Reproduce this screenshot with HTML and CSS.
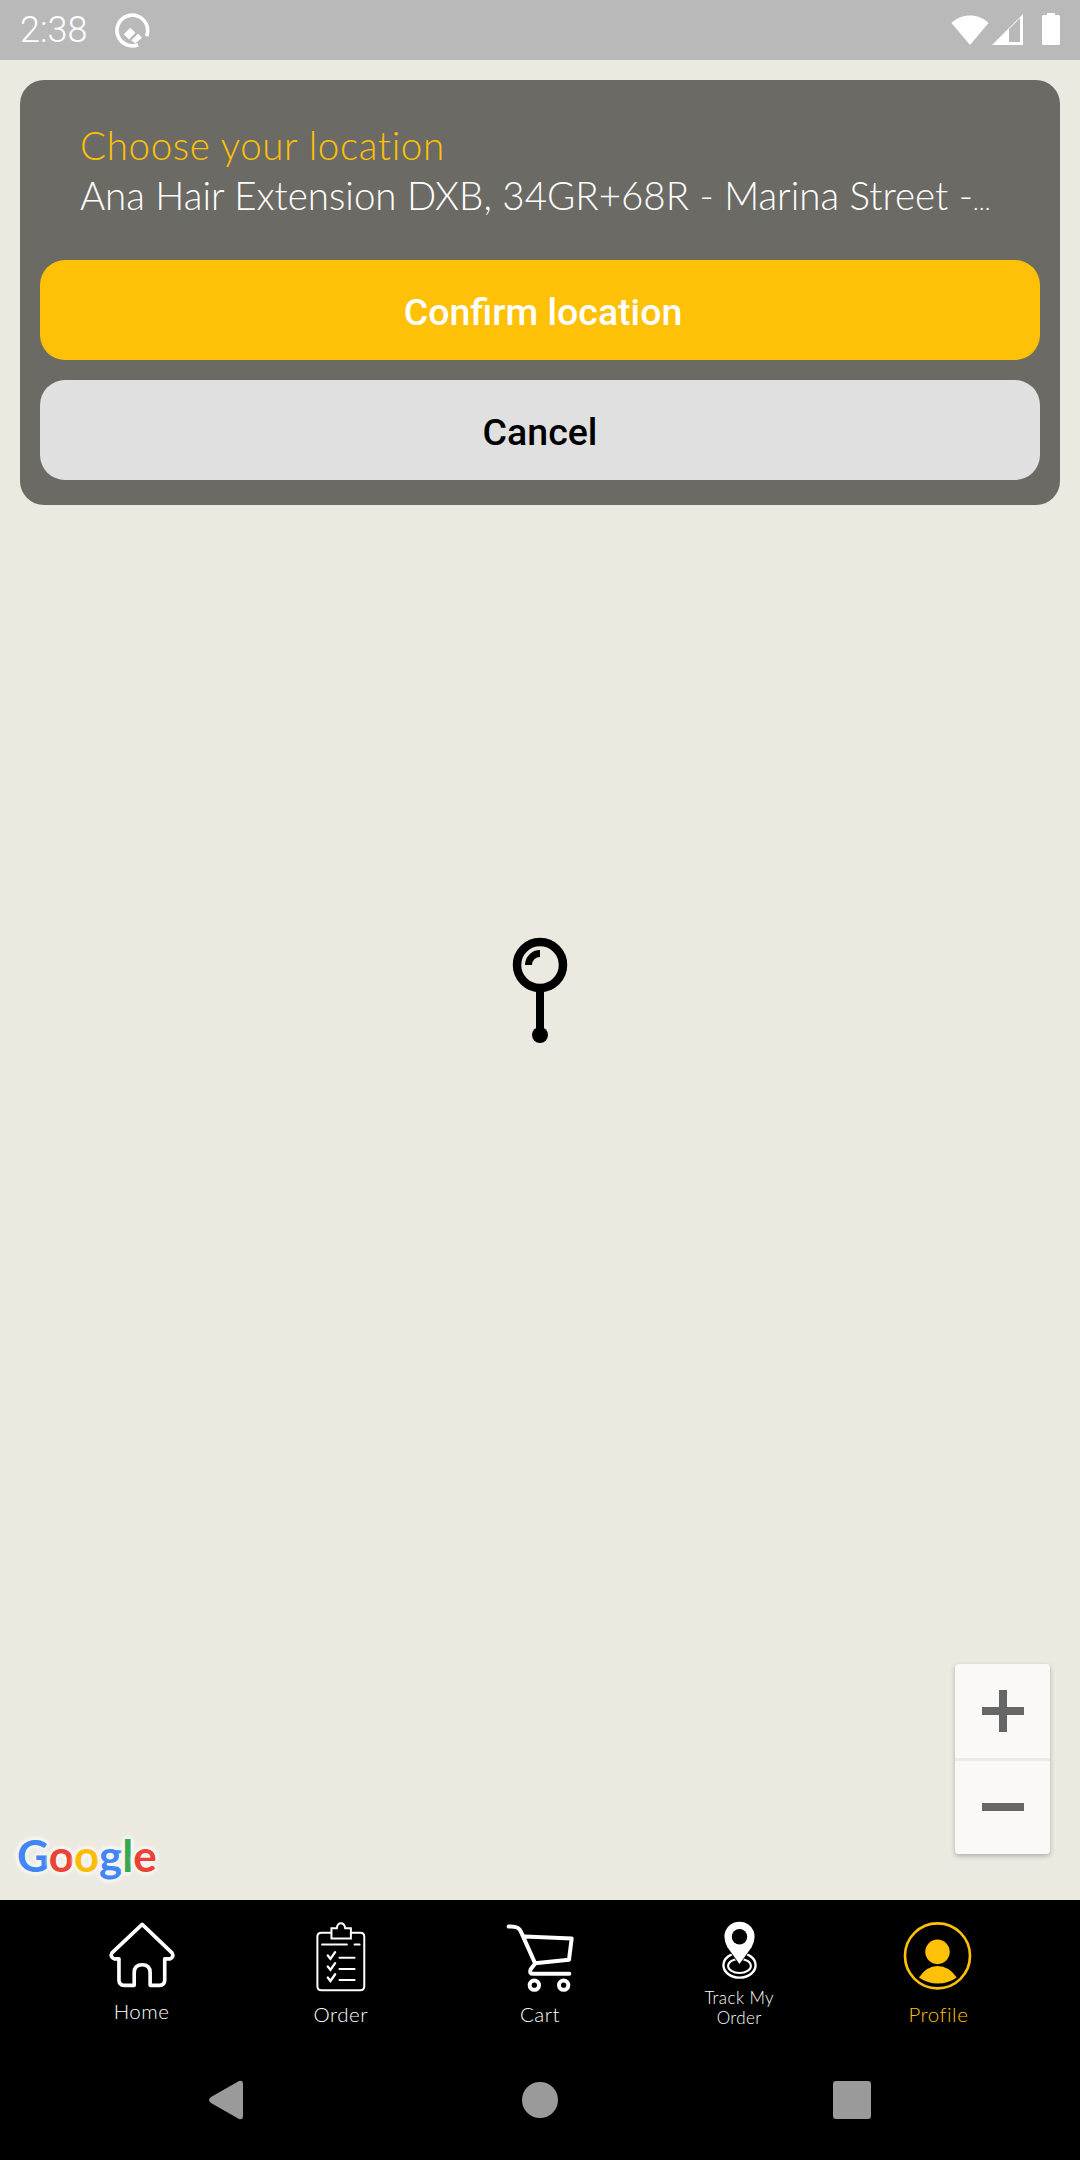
FILE: index.html
```html
<!DOCTYPE html>
<html lang="en">
<head>
<meta charset="utf-8">
<title>Choose your location</title>
<link rel="stylesheet" href="styles.css">
</head>
<body>
<div class="screen">
  <header class="status">
    <div class="status-left">
      <span class="clock">2:38</span>
      <svg class="q-icon" viewBox="335 35 105 110"><circle cx="387" cy="90" r="46" fill="none" stroke="#fff" stroke-width="11" stroke-dasharray="250 39" transform="rotate(68 387 90)"/><path d="M361 101 L381 82 L396 97 L377 117 Z M384 120 L404 100 L416 112 L396 128 Z" fill="#fff"/></svg>
    </div>
    <div class="status-right">
      <svg class="wifi" viewBox="0 0 38 32"><path d="M0.500 10 C10 0 28 0 37.500 10 L19 32 Z" fill="#fff"/></svg>
      <svg class="signal" viewBox="0 0 31 32"><path d="M31 1 V32 H0 Z M17 16 V29 H28 V5 Z" fill="#fff" fill-rule="evenodd"/></svg>
      <svg class="battery" viewBox="0 0 18 32"><path d="M5 2 H13 V0 H5 Z M1.500 2 H16.500 A1.500 1.500 0 0 1 18 3.500 V30.500 A1.500 1.500 0 0 1 16.500 32 H1.500 A1.500 1.500 0 0 1 0 30.500 V3.500 A1.500 1.500 0 0 1 1.500 2 Z" fill="#fff"/></svg>
    </div>
  </header>

  <main class="map">
    <section class="card">
      <div class="place">
        <div class="place-title">Choose your location</div>
        <div class="place-address">Ana Hair Extension DXB, 34GR+68R - Marina Street -<span class="dots">…</span></div>
      </div>
      <button class="btn btn-confirm">Confirm location</button>
      <button class="btn btn-cancel">Cancel</button>
    </section>

    <svg class="pin" viewBox="0 0 60 110"><circle cx="30" cy="30" r="23" fill="none" stroke="#000" stroke-width="8.500"/><path d="M18.500 30 A11.500 11.500 0 0 1 30 18.500" fill="none" stroke="#000" stroke-width="7"/><path d="M30 52 V100" stroke="#000" stroke-width="8"/><circle cx="30" cy="100" r="8" fill="#000"/></svg>

    <div class="zoom">
      <div class="zoom-btn"><svg class="zoom-icon" viewBox="0 0 42 42"><path d="M17 0 H25 V17 H42 V25 H25 V42 H17 V25 H0 V17 H17 Z" fill="#666"/></svg></div>
      <div class="zoom-btn"><svg class="zoom-icon" viewBox="0 0 42 42"><path d="M0 17 H42 V25 H0 Z" fill="#666"/></svg></div>
    </div>

    <div class="google"><span class="g-blue">G</span><span class="g-red">o</span><span class="g-yellow">o</span><span class="g-blue">g</span><span class="g-green">l</span><span class="g-red">e</span></div>
  </main>

  <footer class="bottom">
    <nav class="tabs">
      <a class="tab tab-home">
        <svg class="ic-home" viewBox="325 90 205 205"><path d="M428 100 L518 186 Q525 198 512 204 L496 204 V268 Q496 284 480 284 H452 V246 Q452 222 428 222 Q404 222 404 246 V284 H374 Q358 284 358 268 V204 H344 Q330 198 337 186 Z" fill="none" stroke="#fff" stroke-width="11" stroke-linejoin="round"/></svg>
        <span>Home</span>
      </a>
      <a class="tab">
        <svg class="ic-order" viewBox="945 90 155 215" fill="none" stroke="#fff" stroke-width="6" stroke-linecap="round"><path d="M992 125 H964 Q952 125 952 137 V285 Q952 297 964 297 H1080 Q1092 297 1092 285 V137 Q1092 125 1080 125 H1053"/><path d="M994 142 V112 H1010 Q1012 97 1022 97 Q1033 97 1035 112 H1052 V142 Z"/><path d="M966 160 H1040 M1063 160 H1078 M1018 200 H1063 M1018 233 H1063 M1018 266 H1063"/><path d="M983 193 L991 203 L1005 183 M983 226 L991 236 L1005 216 M983 259 L991 269 L1005 249" stroke-width="7"/></svg>
        <span>Order</span>
      </a>
      <a class="tab">
        <svg class="ic-cart" viewBox="255 90 210 215" fill="none" stroke="#fff" stroke-width="12" stroke-linecap="round" stroke-linejoin="round"><path d="M266 106 Q296 104 302 120 L345 216 L447 206 L455 142 L314 136"/><path d="M345 218 L332 234 Q326 248 340 248 H448"/><circle cx="343" cy="282" r="14"/><circle cx="431" cy="282" r="14"/></svg>
        <span>Cart</span>
      </a>
      <a class="tab tab-track">
        <svg class="ic-track" viewBox="0 90 116 176"><ellipse cx="58" cy="222" rx="48" ry="37" fill="none" stroke="#fff" stroke-width="7"/><ellipse cx="58" cy="224" rx="34" ry="21" fill="none" stroke="#fff" stroke-width="6"/><path d="M58 218 L22 168 Q13 152 13 137 A45 45 0 0 1 103 137 Q103 152 94 168 Z" fill="#fff" stroke="#000" stroke-width="5" paint-order="stroke"/><circle cx="58" cy="137" r="23" fill="#000"/></svg>
        <span>Track My Order</span>
      </a>
      <a class="tab tab-active">
        <svg class="ic-profile" viewBox="548 92 208 208"><circle cx="652" cy="197" r="98" fill="none" stroke="#FFC107" stroke-width="8"/><circle cx="652" cy="185" r="37" fill="#FFC107"/><path d="M596 262 Q620 228 652 228 Q686 228 710 262 A98 98 0 0 1 596 262 Z" fill="#FFC107"/></svg>
        <span>Profile</span>
      </a>
    </nav>
    <div class="sysnav">
      <svg class="sys-back" viewBox="0 0 36 40"><path d="M3 17 L31 1 Q35 0 35 4 V36 Q35 40 31 39 L3 23 Q-1 20 3 17 Z" fill="#9a9a9a"/></svg>
      <span class="sys-home"></span>
      <span class="sys-recent"></span>
    </div>
  </footer>
</div>
</body>
</html>
```

FILE: styles.css
```css
* { box-sizing: border-box; }
html, body { margin: 0; padding: 0; }
body { width: 1080px; height: 2160px; overflow: hidden; font-family: "Lato", "Liberation Sans", sans-serif; }

.screen { width: 1080px; height: 2160px; display: flex; flex-direction: column; background: #EBE9E0; }

.status { height: 60px; flex: none; background: #B9B9B9; display: flex; justify-content: space-between; align-items: center; padding: 0 20px; }
.status-left { display: flex; align-items: center; gap: 28px; }
.clock { font-family: "Roboto", sans-serif; font-size: 36px; font-weight: 300; color: #fff; }
.q-icon { width: 35px; height: 37px; }
.status-right { display: flex; align-items: center; padding-bottom: 2px; }
.wifi { width: 38px; height: 32px; }
.signal { width: 31px; height: 32px; margin-left: 3px; }
.battery { width: 18px; height: 32px; margin-left: 19px; }

.map { position: relative; flex: 1; padding: 20px; }

.card { background: #6C6A65; border-radius: 24px; padding: 40px 20px 25px; display: flex; flex-direction: column; gap: 20px; }
.place { padding: 0 40px; height: 120px; }
.place-title { font-size: 38.500px; line-height: 50px; font-weight: 300; letter-spacing: 0.650px; color: #FFC107; }
.place-address { font-size: 38.500px; line-height: 50px; font-weight: 300; color: #fff; white-space: nowrap; }
.dots { font-size: 24px; }
.btn { height: 100px; border: 0; border-radius: 25px; padding: 3px 0 0; font-family: "Roboto", sans-serif; font-size: 37.500px; font-weight: 500; }
.btn-confirm { background: #FFC107; color: #fff; padding-left: 6px; }
.btn-cancel { background: #E0E0E0; color: #000; }

.pin { position: absolute; left: 510px; top: 875px; width: 60px; height: 110px; }

.zoom { position: absolute; left: 955px; top: 1604px; width: 95px; height: 190px; background: #FAF9F7; border-radius: 4px; box-shadow: 0 2px 5px rgba(0,0,0,.25); display: flex; flex-direction: column; }
.zoom-btn { flex: 1; display: flex; align-items: center; justify-content: center; }
.zoom-btn + .zoom-btn { border-top: 3px solid #ECEAE6; }
.zoom-icon { width: 42px; height: 42px; }

.google { position: absolute; left: 17px; top: 1767px; font-family: "Lato", sans-serif; font-size: 44px; font-weight: 700; line-height: 56px; letter-spacing: 0; text-shadow: 0 0 3px #f6f5f1, 0 0 5px #f6f5f1, 0 0 6px #f6f5f1, 3px 0 3px #f6f5f1, -3px 0 3px #f6f5f1, 0 3px 3px #f6f5f1, 0 -3px 3px #f6f5f1; }
.g-blue { color: #4285F4; }
.g-red { color: #EA4335; }
.g-yellow { color: #FBBC05; }
.g-green { color: #34A853; }

.bottom { height: 260px; flex: none; background: #000; display: flex; flex-direction: column; }
.tabs { height: 140px; padding: 0 42px; display: flex; }
.tab { flex: 1; display: flex; flex-direction: column; align-items: center; padding-top: 21px; color: #fff; font-size: 20.500px; line-height: 26px; font-weight: 300; letter-spacing: 0.500px; text-align: center; }
.tab svg { flex: none; display: block; }
.ic-home { width: 68px; height: 68px; margin-bottom: 9px; }
.ic-order { width: 52px; height: 72px; margin-bottom: 8px; }
.ic-cart { width: 70px; height: 72px; margin-bottom: 8px; }
.tab-track { font-size: 17px; line-height: 20px; letter-spacing: 0.400px; }
.tab-track span { width: 90px; }
.ic-track { width: 39px; height: 59px; margin-bottom: 8px; }
.ic-profile { width: 69px; height: 69px; margin-bottom: 11px; margin-right: 2px; }
.tab-active { color: #FFC107; }

.sysnav { flex: 1; display: flex; align-items: center; padding-left: 208px; }
.sys-back { width: 36px; height: 40px; margin-right: 278px; }
.sys-home { width: 36px; height: 36px; border-radius: 50%; background: #9a9a9a; margin-right: 275px; }
.sys-recent { width: 38px; height: 38px; border-radius: 3px; background: #9a9a9a; }
```
